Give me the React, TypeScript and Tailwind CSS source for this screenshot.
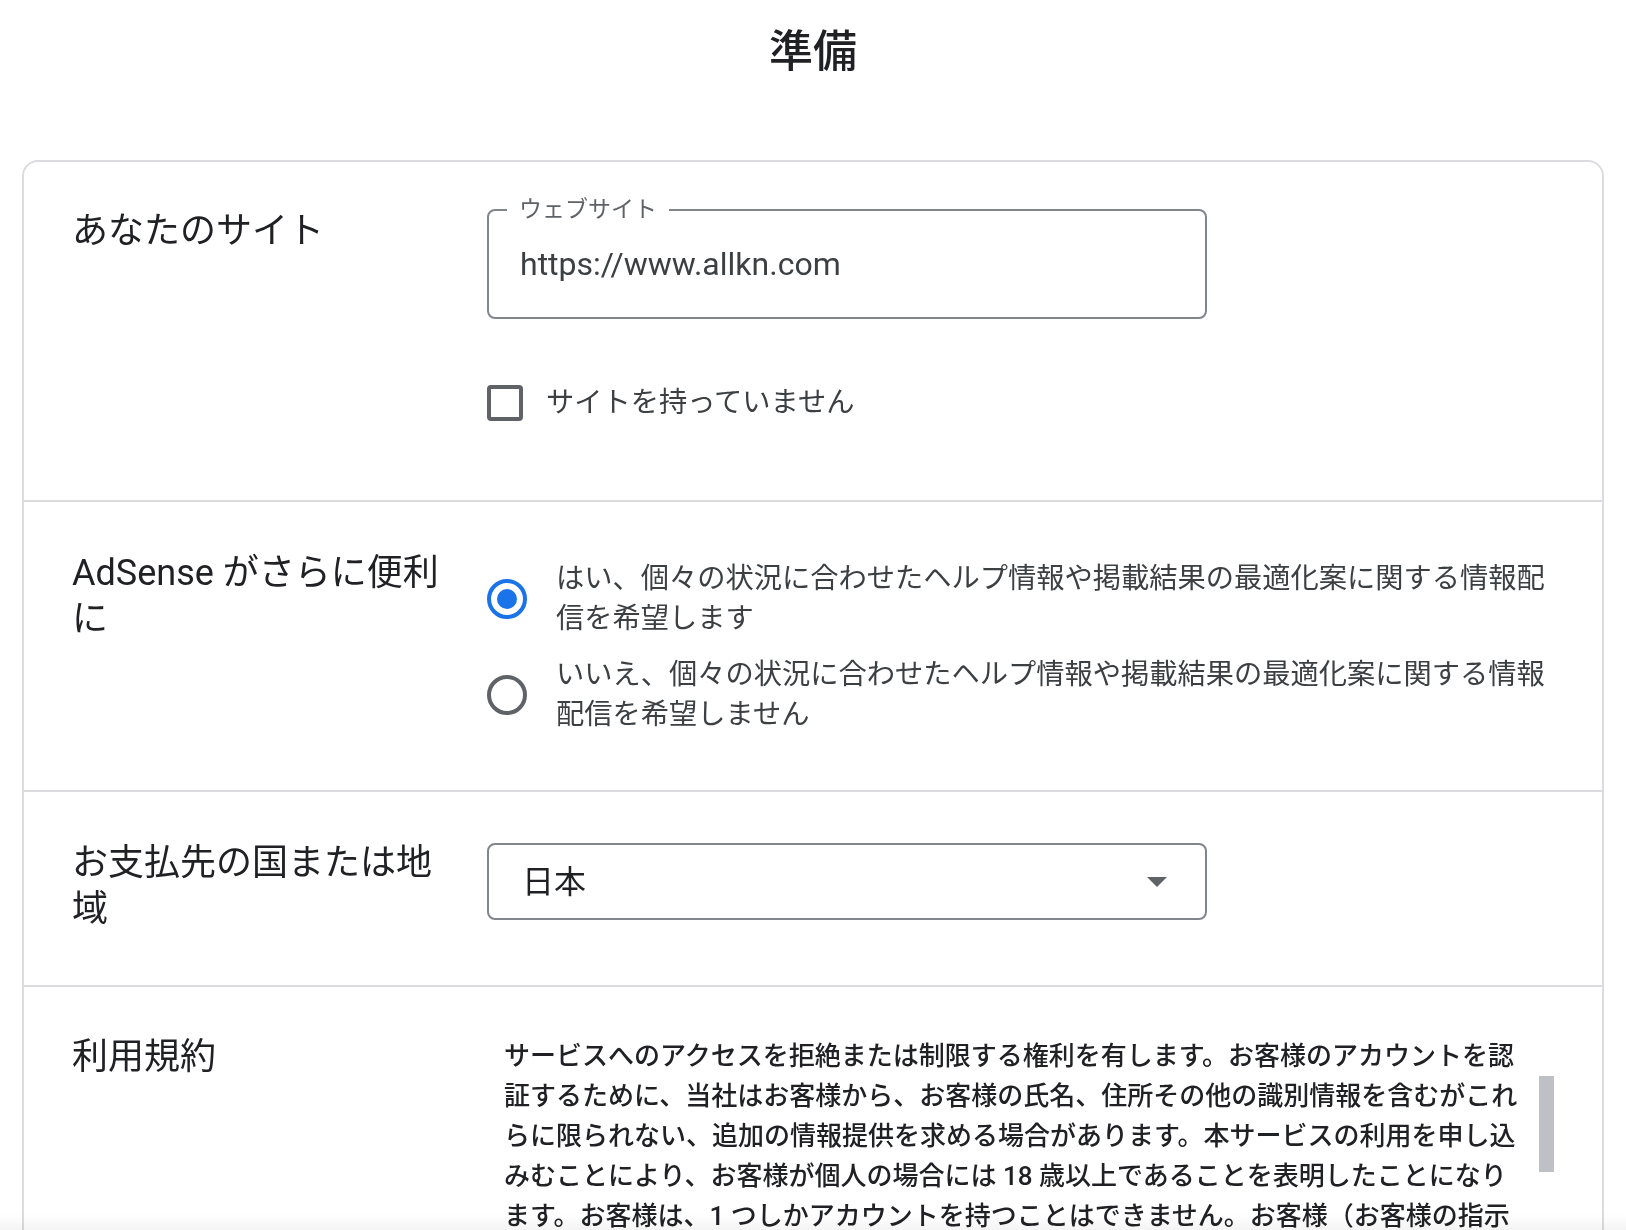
import { useState } from "react";

const terms = [
  "サービスへのアクセスを拒絶または制限する権利を有します。お客様のアカウントを認",
  "証するために、当社はお客様から、お客様の氏名、住所その他の識別情報を含むがこれ",
  "らに限られない、追加の情報提供を求める場合があります。本サービスの利用を申し込",
  "みむことにより、お客様が個人の場合には 18 歳以上であることを表明したことになり",
  "ます。お客様は、1 つしかアカウントを持つことはできません。お客様（お客様の指示",
  "に基づいて行動する者を含む）が本規約に違反した場合、当社はお客様のアカウントを",
];

const options = [
  { value: "yes", lines: ["はい、個々の状況に合わせたヘルプ情報や掲載結果の最適化案に関する情報配", "信を希望します"] },
  { value: "no", lines: ["いいえ、個々の状況に合わせたヘルプ情報や掲載結果の最適化案に関する情報", "配信を希望しません"] },
];

function Radio({ checked }: { checked: boolean }) {
  return (
    <span
      className={`flex items-center justify-center w-[40px] h-[40px] shrink-0 rounded-full border-[4px] ${
        checked ? "border-[#1a73e8]" : "border-[#5f6368]"
      }`}
    >
      {checked && <span className="block w-[20px] h-[20px] rounded-full bg-[#1a73e8]" />}
    </span>
  );
}

export default function App() {
  const [choice, setChoice] = useState("yes");
  const [noSite, setNoSite] = useState(false);

  return (
    <div className="relative h-[1230px] overflow-hidden bg-white text-[#202124] font-[Roboto,'Noto_Sans_CJK_JP',sans-serif]">
      <h1 className="pt-[22px] text-center text-[44px] leading-[60px] font-medium">準備</h1>

      <div className="mx-[22px] mt-[78px] rounded-[16px] border-2 border-[#dadce0]">
        {/* Site */}
        <div className="grid grid-cols-[415px_1fr] pl-[48px] pr-[48px] pt-[45px] pb-[79px]">
          <div className="w-[380px] pt-[1px] text-[36px] leading-[46px]">あなたのサイト</div>
          <div className="pt-[2px]">
            <div className="relative flex items-center w-[720px] h-[110px] rounded-[8px] border-2 border-[#80868b] pl-[31px]">
              <span className="absolute left-[18px] -top-[14px] bg-white px-[12px] text-[23px] leading-[26px] text-[#5f6368]">
                ウェブサイト
              </span>
              <span className="text-[32px] leading-[40px] text-[#3c4043]">https://www.allkn.com</span>
            </div>
            <label
              className="mt-[66px] flex items-center gap-[23px] cursor-pointer"
              onClick={() => setNoSite(!noSite)}
            >
              <span className="flex items-center justify-center w-[36px] h-[36px] rounded-[4px] border-[4px] border-[#5f6368]">
                {noSite && <span className="block w-[16px] h-[16px] bg-[#5f6368]" />}
              </span>
              <span className="text-[28.25px] leading-[36px] text-[#3c4043]">サイトを持っていません</span>
            </label>
          </div>
        </div>

        {/* Preferences */}
        <div className="grid grid-cols-[415px_1fr] border-t-2 border-[#dadce0] pl-[48px] pr-[30px] pt-[47px] pb-[55px]">
          <div className="w-[380px] pt-[1px] text-[36px] leading-[46px]">AdSense がさらに便利に</div>
          <div className="pt-[10px] flex flex-col gap-[16px]">
            {options.map((o) => (
              <div
                key={o.value}
                className="flex items-center gap-[29px] cursor-pointer"
                onClick={() => setChoice(o.value)}
              >
                <Radio checked={choice === o.value} />
                <span className="text-[28.25px] leading-[40px] text-[#3c4043] whitespace-nowrap">
                  {o.lines[0]}
                  <br />
                  {o.lines[1]}
                </span>
              </div>
            ))}
          </div>
        </div>

        {/* Country */}
        <div className="grid grid-cols-[415px_1fr] border-t-2 border-[#dadce0] pl-[48px] pr-[48px] pt-[47px] pb-[53px]">
          <div className="w-[380px] pt-[1px] text-[36px] leading-[46px]">お支払先の国または地域</div>
          <div className="pt-[4px]">
            <div className="flex items-center justify-between w-[720px] h-[77px] rounded-[8px] border-2 border-[#80868b] pl-[33px] pr-[38px]">
              <span className="text-[32px] leading-[40px] text-[#202124]">日本</span>
              <svg width="20" height="10" viewBox="0 0 20 10">
                <path d="M0 0h20L10 10z" fill="#5f6368" />
              </svg>
            </div>
          </div>
        </div>

        {/* Terms */}
        <div className="grid grid-cols-[415px_1fr] border-t-2 border-[#dadce0] pl-[48px] pr-[48px] pt-[46px]">
          <div className="w-[380px] pt-[1px] text-[36px] leading-[46px]">利用規約</div>
          <div className="relative pt-[3px] h-[400px] overflow-hidden">
            <div className="pl-[17px] text-[26px] leading-[40px] font-medium text-[#202124] whitespace-nowrap">
              {terms.map((t) => (
                <div key={t}>{t}</div>
              ))}
            </div>
            <div className="absolute left-[1052px] top-[43px] w-[16px] h-[96px] bg-[#bdc1c6]" />
          </div>
        </div>
      </div>

      <div className="absolute bottom-0 left-0 right-0 h-[16px] mix-blend-multiply bg-linear-to-b from-white to-[#f4f4f4]" />
    </div>
  );
}
